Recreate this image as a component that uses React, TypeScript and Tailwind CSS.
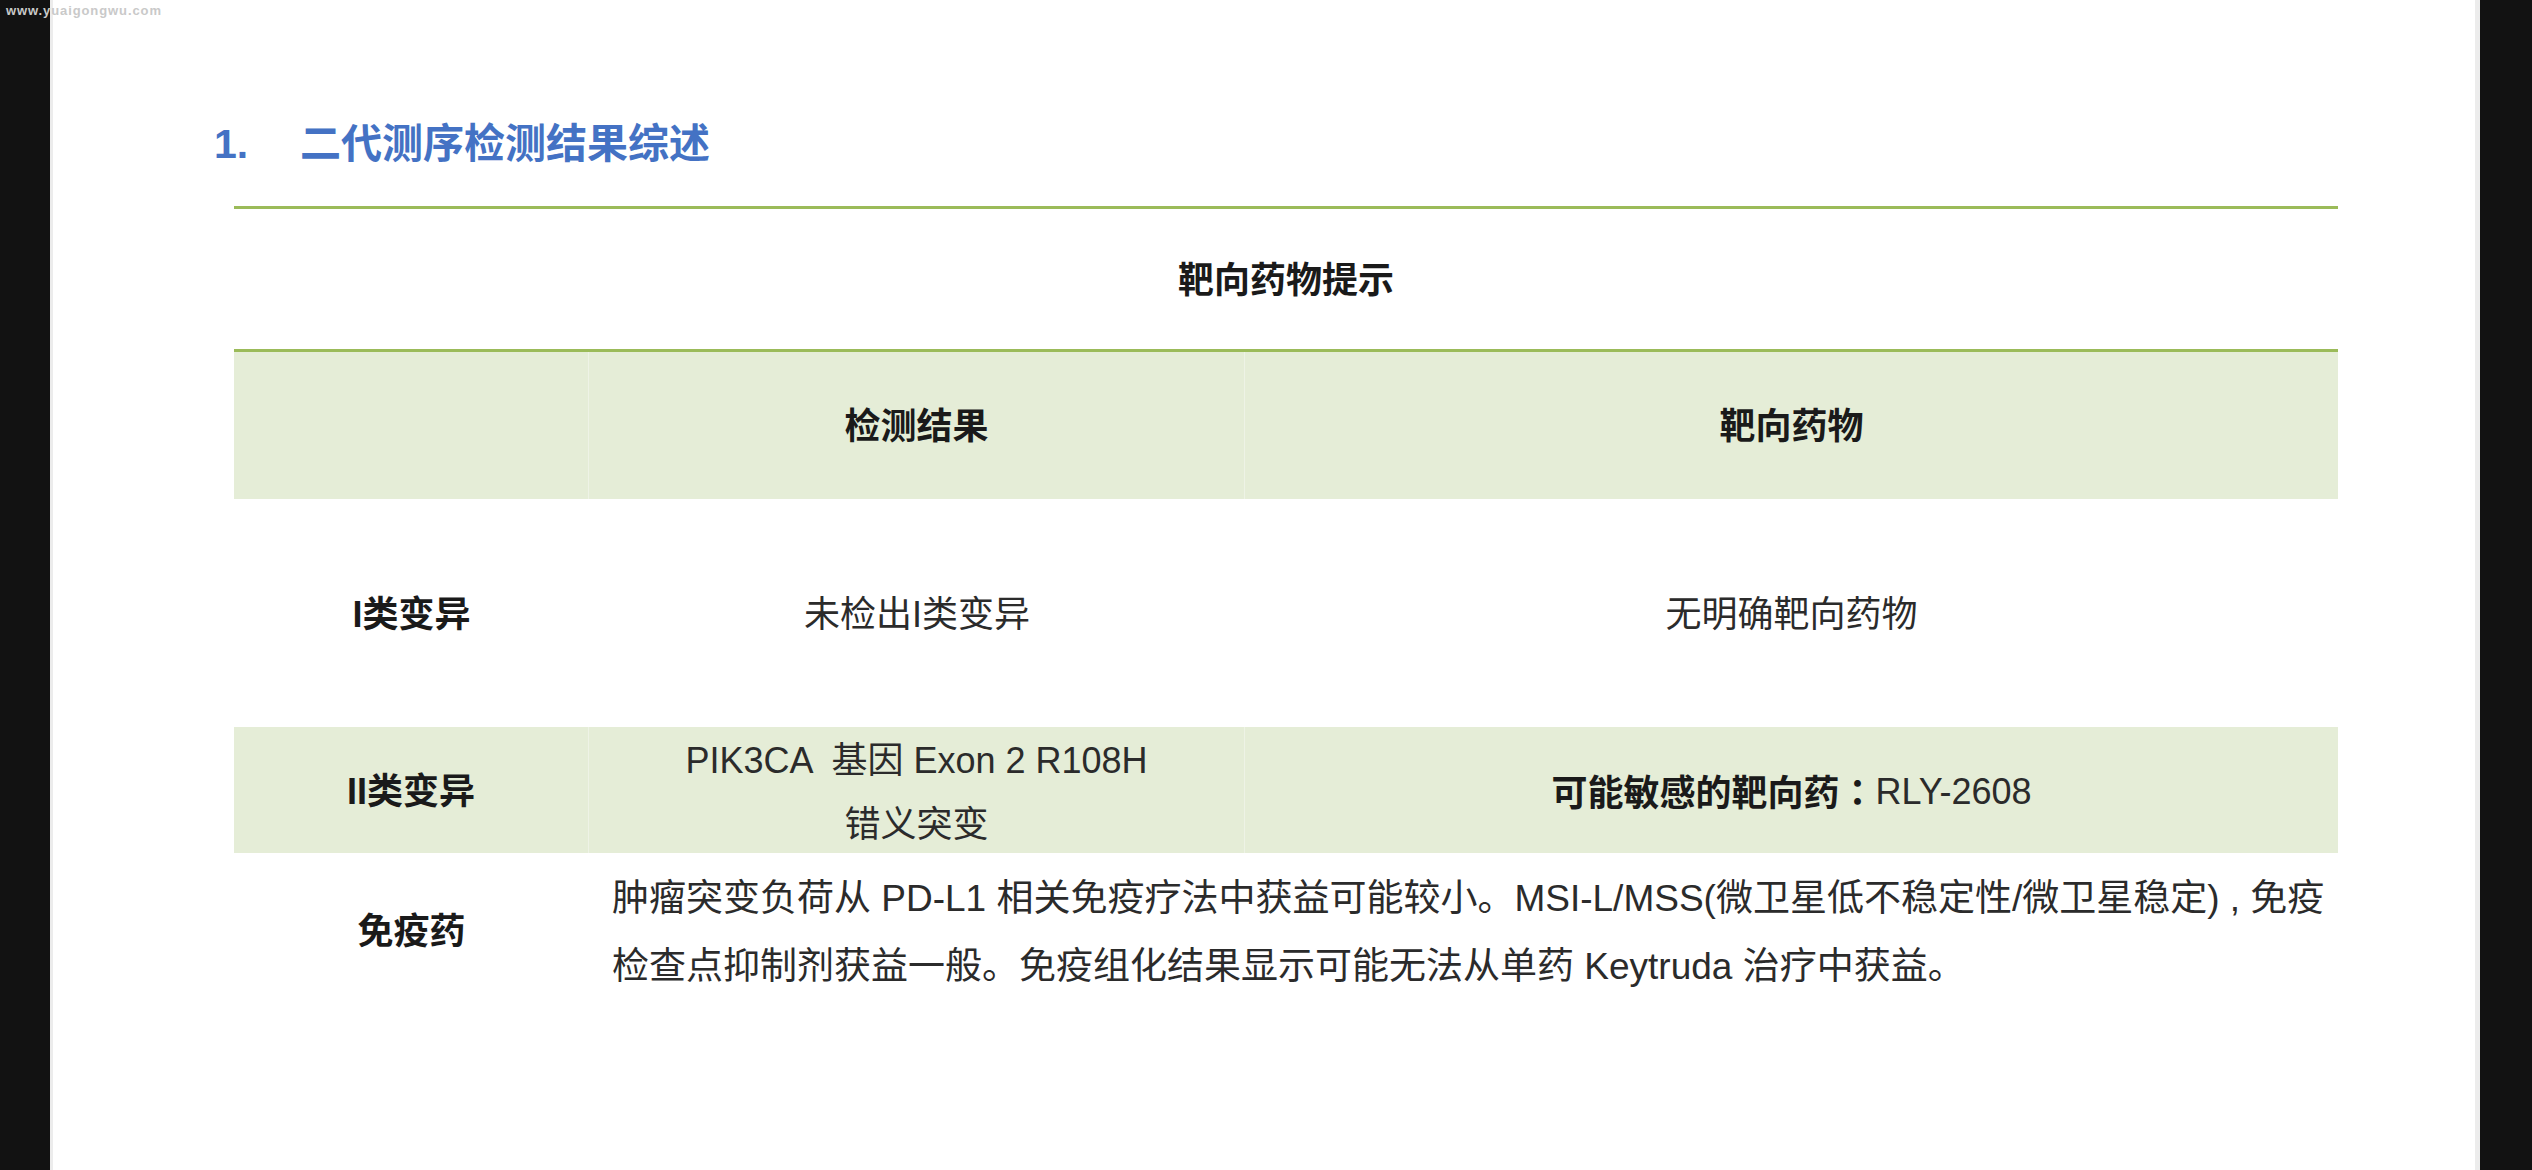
import React from "react";

const font = "[font-family:'Liberation_Sans','Noto_Sans_CJK_SC',sans-serif]";

export default function App() {
  return (
    <div className={`relative flex h-[1170px] w-[2532px] overflow-hidden bg-[#121212] ${font}`}>
      <div className="absolute left-[6px] top-[3px] text-[13px] font-bold tracking-[0.9px] text-[#c9c9c9] leading-[16px]">
        www.yuaigongwu.com
      </div>
      <div className="w-[50px] shrink-0" />
      <div className="flex h-full w-[2430px] shrink-0 flex-col border-l-[3px] border-r-[5px] border-[#ececec] bg-white">
        {/* Title */}
        <div className="ml-[161px] mt-[114px] flex h-[60px] items-center text-[41px] font-bold leading-[60px] text-[#4472c4]">
          <span className="w-[86px]">1.</span>
          <span>二代测序检测结果综述</span>
        </div>

        {/* Table */}
        <div className="ml-[181px] mt-[32px] w-[2104px] border-t-[3px] border-[#9bbb59]">
          <div className="flex h-[140px] items-center justify-center pt-[4px] text-[36px] font-bold text-[#1a1a1a]">
            靶向药物提示
          </div>
          <div className="border-t-[3px] border-[#9bbb59]" />
          <div className="grid grid-cols-[355px_656px_1093px]">
            {/* header row */}
            <div className="h-[147px] border-r border-[#eef3e6] bg-[#e5edd7]" />
            <div className="flex h-[147px] items-center justify-center border-r border-[#eef3e6] bg-[#e5edd7] pt-[2px] text-[36px] font-bold text-[#1a1a1a]">
              检测结果
            </div>
            <div className="flex h-[147px] items-center justify-center bg-[#e5edd7] pt-[2px] text-[36px] font-bold text-[#1a1a1a]">
              靶向药物
            </div>

            {/* Row I */}
            <div className="flex h-[228px] items-center justify-center pt-[4px] text-[36px] font-bold text-[#1a1a1a]">
              I类变异
            </div>
            <div className="flex h-[228px] items-center justify-center pt-[4px] text-[36px] text-[#2b2b2b]">
              未检出I类变异
            </div>
            <div className="flex h-[228px] items-center justify-center pt-[4px] text-[36px] text-[#2b2b2b]">
              无明确靶向药物
            </div>

            {/* Row II */}
            <div className="flex h-[126px] items-center justify-center border-r border-[#eef3e6] bg-[#e5edd7] pt-[4px] text-[36px] font-bold text-[#1a1a1a]">
              II类变异
            </div>
            <div className="flex h-[126px] flex-col items-center justify-center border-r border-[#eef3e6] bg-[#e5edd7] pt-[6px] text-[36px] leading-[64px] text-[#2b2b2b]">
              <span className="whitespace-pre">PIK3CA  基因 Exon 2 R108H</span>
              <span>错义突变</span>
            </div>
            <div className="flex h-[126px] items-center justify-center bg-[#e5edd7] pt-[4px] text-[36px] text-[#2b2b2b]">
              <span className="font-bold text-[#1a1a1a]">
                可能敏感的靶向药<span className="[font-family:'Noto_Sans_CJK_TC',sans-serif]">：</span>
              </span>
              <span>RLY-2608</span>
            </div>

            {/* Row III */}
            <div className="flex h-[158px] items-center justify-center text-[36px] font-bold text-[#1a1a1a]">
              免疫药
            </div>
            <div className="col-span-2 flex h-[158px] flex-col justify-center pl-[23px] pt-[2px] text-[37px] leading-[68px] text-[#2b2b2b]">
              <span className="whitespace-nowrap">
                肿瘤突变负荷从 PD-L1 相关免疫疗法中获益可能较小。MSI-L/MSS(微卫星低不稳定性/微卫星稳定) , 免疫
              </span>
              <span className="whitespace-nowrap">
                检查点抑制剂获益一般。免疫组化结果显示可能无法从单药 Keytruda 治疗中获益。
              </span>
            </div>
          </div>
        </div>
      </div>
      <div className="flex-1" />
    </div>
  );
}
